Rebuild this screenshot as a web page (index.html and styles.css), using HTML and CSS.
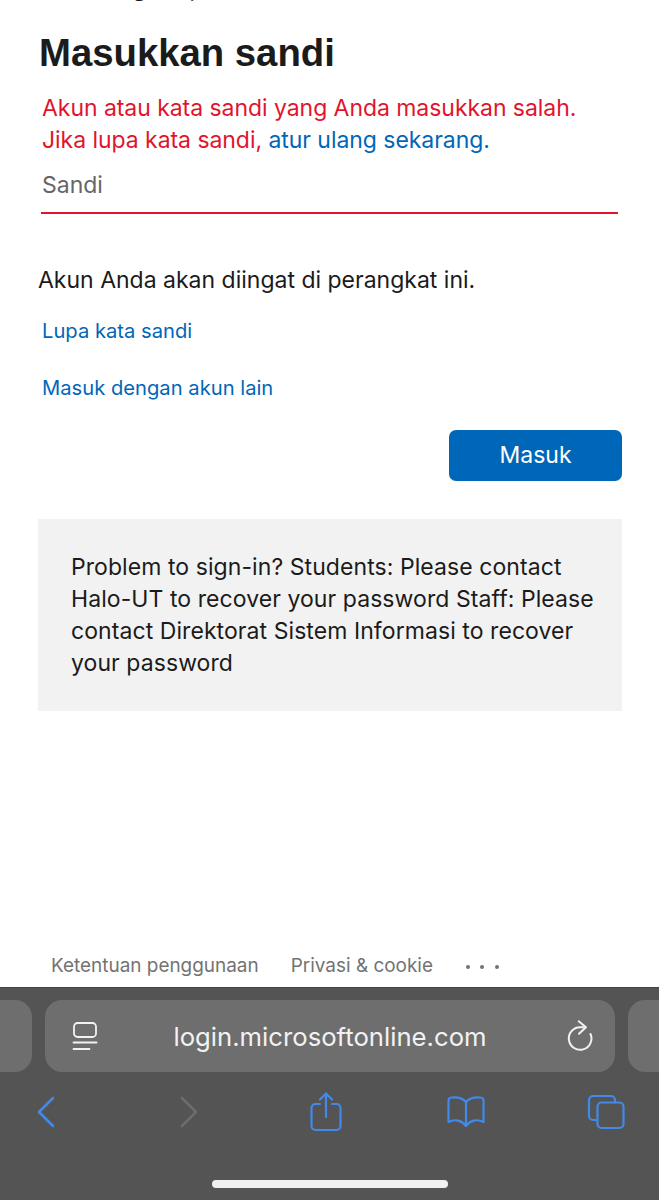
FILE: index.html
```html
<!DOCTYPE html>
<html lang="id">
<head>
<meta charset="utf-8">
<title>Masukkan sandi</title>
<link rel="stylesheet" href="styles.css">
</head>
<body>
<div class="page">
  <main class="content">
    <div class="identity">gut.ap</div>
    <h1 class="title">Masukkan sandi</h1>
    <div class="inset">
      <p class="error">Akun atau kata sandi yang Anda masukkan salah.<br>Jika lupa kata sandi, <a class="link">atur ulang sekarang.</a></p>
      <div class="field">Sandi</div>
    </div>
    <p class="remember">Akun Anda akan diingat di perangkat ini.</p>
    <div class="inset links">
      <a class="link small">Lupa kata sandi</a>
      <a class="link small">Masuk dengan akun lain</a>
    </div>
    <div class="actions"><button class="submit">Masuk</button></div>
    <div class="notice">Problem to sign-in? Students: Please contact Halo-UT to recover your password Staff: Please contact Direktorat Sistem Informasi to recover your password</div>
  </main>
  <footer class="legal">
    <span>Ketentuan penggunaan</span>
    <span>Privasi &amp; cookie</span>
    <span class="dots"><i></i><i></i><i></i></span>
  </footer>
  <section class="browser">
    <div class="address-row">
      <div class="tab-peek"></div>
      <div class="address">
        <svg class="reader" width="26" height="30" viewBox="0 0 26 30" fill="none" stroke="#f2f2f2" stroke-width="1.8" stroke-linecap="round"><rect x="2" y="2" width="22" height="14" rx="3.5"/><path d="M1.500 21.500h23M1.500 28h16"/></svg>
        <span class="url">login.microsoftonline.com</span>
        <svg class="reload" width="28" height="34" viewBox="0 0 28 34" fill="none" stroke="#f2f2f2" stroke-width="2" stroke-linecap="round" stroke-linejoin="round"><path d="M19 8.200H14A11.300 11.300 0 1 0 24.500 15"/><path d="M12.700 2.300 20 8.200l-7 6.500"/></svg>
      </div>
      <div class="tab-peek"></div>
    </div>
    <nav class="toolbar">
      <svg class="tool" width="20" height="32" viewBox="0 0 20 32" fill="none" stroke="#4189ea" stroke-width="2.600" stroke-linecap="round" stroke-linejoin="round"><path d="M17 2 3 16l14 14"/></svg>
      <svg class="tool forward" width="20" height="32" viewBox="0 0 20 32" fill="none" stroke="#6c6c6c" stroke-width="2.600" stroke-linecap="round" stroke-linejoin="round"><path d="M3 2l14 14L3 30"/></svg>
      <svg class="tool" width="32" height="40" viewBox="0 0 32 40" fill="none" stroke="#4189ea" stroke-width="2.200" stroke-linecap="round" stroke-linejoin="round"><path d="M10 12H5.500a4 4 0 0 0-4 4v18a4 4 0 0 0 4 4h21a4 4 0 0 0 4-4V16a4 4 0 0 0-4-4H22"/><path d="M16 25V1.500M10 7.500l6-6 6 6"/></svg>
      <svg class="tool" width="38" height="32" viewBox="0 0 38 32" fill="none" stroke="#4189ea" stroke-width="2.200" stroke-linecap="round" stroke-linejoin="round"><path d="M19 6C16 2.500 10 1 4.500 1.500 2.500 1.700 1.500 2.500 1.500 4.500V26C8 22.500 15 24.500 19 30c4-5.500 11-7.500 17.500-4V4.500c0-2-1-2.800-3-3C28 1 22 2.500 19 6zM19 6v24"/></svg>
      <svg class="tool" width="38" height="36" viewBox="0 0 38 36" fill="none" stroke="#4189ea" stroke-width="2.200" stroke-linecap="round" stroke-linejoin="round"><path d="M9 26H6a4 4 0 0 1-4-4V6a4 4 0 0 1 4-4h18a4 4 0 0 1 4 4v2.500"/><rect x="10.500" y="8.500" width="26" height="25.500" rx="4"/></svg>
    </nav>
    <div class="home-indicator"></div>
  </section>
</div>
</body>
</html>
```
FILE: styles.css
```css
* { box-sizing: border-box; }
html, body { margin: 0; padding: 0; background: #fff; }
.page {
  width: 659px;
  height: 1200px;
  overflow: hidden;
  display: flex;
  flex-direction: column;
  font-family: Inter, "Liberation Sans", sans-serif;
  color: #1b1b1b;
}
.content {
  flex: 1;
  padding: 0 37px 0 38px;
  display: flex;
  flex-direction: column;
}
.identity { font-size: 24px; line-height: 30px; margin-top: -27px; height: 30px; padding-left: 94px; }
.title {
  margin: 28px 0 0 1px;
  font-family: "Liberation Sans", Arial, sans-serif;
  font-weight: 700;
  font-size: 38.300px;
  line-height: 44px;
}
.inset { padding: 0 4px; }
.error { margin: 17px 0 0; color: #e2142d; font-size: 23px; line-height: 32px; letter-spacing: -0.05px; }
.link { color: #0067b8; text-decoration: none; }
.field {
  margin: 8px 0 0 -1px;
  padding: 5px 0 0 1px;
  height: 50px;
  color: #666;
  font-size: 23px;
  line-height: 32px;
  border-bottom: 2px solid #e2142d;
}
.remember { margin: 50px 0 0; font-size: 23px; line-height: 32px; }
.links { display: flex; flex-direction: column; gap: 28px; margin-top: 20px; }
.small { font-size: 20.200px; line-height: 29px; }
.actions { display: flex; justify-content: flex-end; margin-top: 28px; }
.submit {
  width: 173px;
  height: 51px;
  border: 0;
  border-radius: 7px;
  background: #0067b8;
  color: #fff;
  font: 400 23px/51px Inter, "Liberation Sans", sans-serif;
  padding: 0;
}
.notice {
  margin-top: 38px;
  height: 192px;
  background: #f2f2f2;
  padding: 32px 18px 0 33px;
  font-size: 23px;
  line-height: 32px;
  letter-spacing: 0.07px;
}
.legal {
  height: 44px;
  display: flex;
  align-items: center;
  gap: 32px;
  padding: 0 0 0 51px;
  color: #737373;
  font-size: 18.950px;
  flex: none;
}
.dots { display: flex; gap: 10.500px; padding-top: 4px; margin-left: 1px; }
.dots i { width: 4px; height: 4px; border-radius: 50%; background: #737373; }
.browser {
  flex: none;
  height: 213px;
  background: #545454;
  border-top: 1px solid #454545;
  display: flex;
  flex-direction: column;
  position: relative;
}
.address-row { display: flex; gap: 13px; margin: 12px -70px 0 -69px; height: 72px; }
.tab-peek { width: 101px; flex: none; background: #6e6e6e; border-radius: 17px; }
.address {
  flex: 1;
  background: #6e6e6e;
  border-radius: 17px;
  display: grid;
  grid-template-columns: 1fr auto 1fr;
  align-items: center;
  padding: 0 21px;
  color: #f2f2f2;
}
.reader { margin-left: 6px; }
.reload { justify-self: end; }
.url { font-size: 25.700px; }
.toolbar {
  display: grid;
  grid-template-columns: repeat(5, 140px);
  justify-items: center;
  align-items: center;
  margin: 18px 0 0 -24px;
  height: 44px;
}
.forward { margin-left: 5px; }
.home-indicator {
  position: absolute;
  left: 212px;
  bottom: 12px;
  width: 236px;
  height: 8px;
  border-radius: 4px;
  background: #f0f0f0;
}
```
